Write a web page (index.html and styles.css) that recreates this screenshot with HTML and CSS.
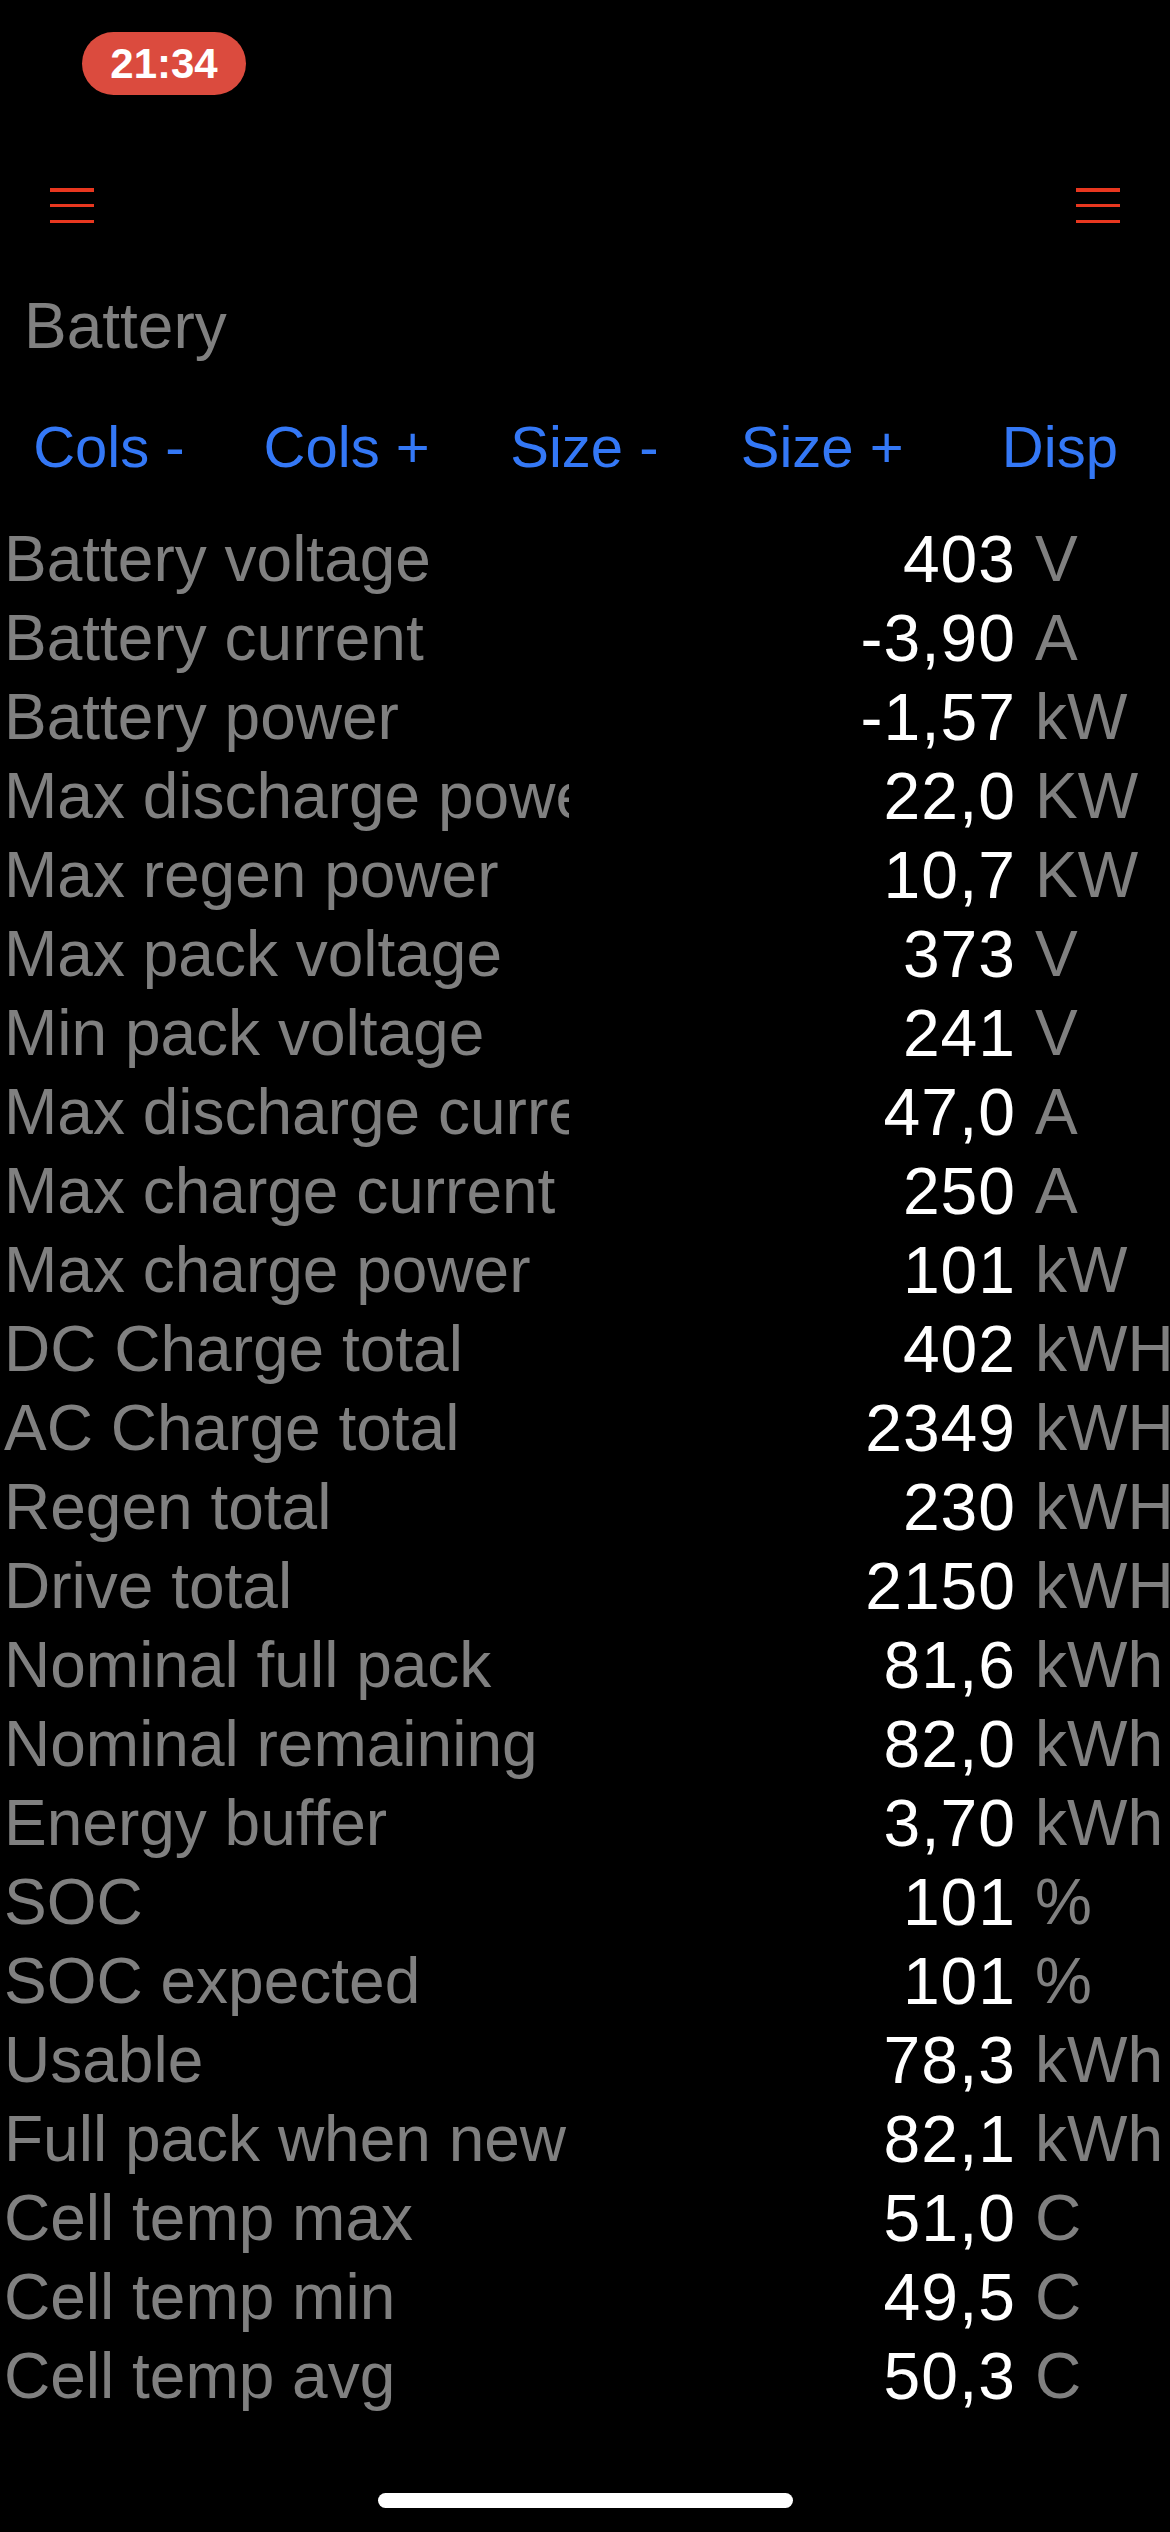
FILE: index.html
```html
<!DOCTYPE html>
<html>
<head>
<meta charset="utf-8">
<link rel="stylesheet" href="styles.css">
</head>
<body>
<div class="screen">
  <div class="status">
    <div class="pill">21:34</div>
  </div>
  <div class="toolbar">
    <div class="burger"><span></span><span></span><span></span></div>
    <div class="burger"><span></span><span></span><span></span></div>
  </div>
  <div class="title">Battery</div>
  <div class="buttons">
    <div class="btn">Cols -</div>
    <div class="btn">Cols +</div>
    <div class="btn">Size -</div>
    <div class="btn">Size +</div>
    <div class="btn">Disp</div>
  </div>
  <div class="list">
    <div class="row"><div class="lbl">Battery voltage</div><div class="val">403</div><div class="unit">V</div></div>
    <div class="row"><div class="lbl">Battery current</div><div class="val">-3,90</div><div class="unit">A</div></div>
    <div class="row"><div class="lbl">Battery power</div><div class="val">-1,57</div><div class="unit">kW</div></div>
    <div class="row"><div class="lbl">Max discharge power</div><div class="val">22,0</div><div class="unit">KW</div></div>
    <div class="row"><div class="lbl">Max regen power</div><div class="val">10,7</div><div class="unit">KW</div></div>
    <div class="row"><div class="lbl">Max pack voltage</div><div class="val">373</div><div class="unit">V</div></div>
    <div class="row"><div class="lbl">Min pack voltage</div><div class="val">241</div><div class="unit">V</div></div>
    <div class="row"><div class="lbl">Max discharge current</div><div class="val">47,0</div><div class="unit">A</div></div>
    <div class="row"><div class="lbl">Max charge current</div><div class="val">250</div><div class="unit">A</div></div>
    <div class="row"><div class="lbl">Max charge power</div><div class="val">101</div><div class="unit">kW</div></div>
    <div class="row"><div class="lbl">DC Charge total</div><div class="val">402</div><div class="unit">kWH</div></div>
    <div class="row"><div class="lbl">AC Charge total</div><div class="val">2349</div><div class="unit">kWH</div></div>
    <div class="row"><div class="lbl">Regen total</div><div class="val">230</div><div class="unit">kWH</div></div>
    <div class="row"><div class="lbl">Drive total</div><div class="val">2150</div><div class="unit">kWH</div></div>
    <div class="row"><div class="lbl">Nominal full pack</div><div class="val">81,6</div><div class="unit">kWh</div></div>
    <div class="row"><div class="lbl">Nominal remaining</div><div class="val">82,0</div><div class="unit">kWh</div></div>
    <div class="row"><div class="lbl">Energy buffer</div><div class="val">3,70</div><div class="unit">kWh</div></div>
    <div class="row"><div class="lbl">SOC</div><div class="val">101</div><div class="unit">%</div></div>
    <div class="row"><div class="lbl">SOC expected</div><div class="val">101</div><div class="unit">%</div></div>
    <div class="row"><div class="lbl">Usable</div><div class="val">78,3</div><div class="unit">kWh</div></div>
    <div class="row"><div class="lbl">Full pack when new</div><div class="val">82,1</div><div class="unit">kWh</div></div>
    <div class="row"><div class="lbl">Cell temp max</div><div class="val">51,0</div><div class="unit">C</div></div>
    <div class="row"><div class="lbl">Cell temp min</div><div class="val">49,5</div><div class="unit">C</div></div>
    <div class="row"><div class="lbl">Cell temp avg</div><div class="val">50,3</div><div class="unit">C</div></div>
  </div>
  <div class="home"></div>
</div>
</body>
</html>
```
FILE: styles.css
```css
html, body {
  margin: 0;
  padding: 0;
  background: #000;
}
.screen {
  position: relative;
  width: 1170px;
  height: 2532px;
  overflow: hidden;
  background: #000;
  font-family: "Liberation Sans", Arial, sans-serif;
}
.status {
  padding: 32px 0 0 82px;
  height: 64px;
}
.pill {
  width: 164px;
  height: 63px;
  border-radius: 32px;
  background: #db4b3e;
  color: #fff;
  font-size: 42px;
  font-weight: 700;
  line-height: 63px;
  text-align: center;
}
.toolbar {
  margin-top: 92px;
  padding: 0 50px;
  display: flex;
  justify-content: space-between;
}
.burger {
  width: 44px;
  height: 35px;
  display: flex;
  flex-direction: column;
  justify-content: space-between;
}
.burger span {
  display: block;
  height: 3.5px;
  background: #e8371f;
}
.title {
  margin-top: 64px;
  padding-left: 24px;
  font-size: 64px;
  line-height: 79px;
  color: #808080;
}
.buttons {
  margin-top: 41px;
  margin-left: -10px;
  display: grid;
  grid-template-columns: repeat(5, 237.75px);
}
.btn {
  text-align: center;
  font-size: 58px;
  line-height: 79px;
  color: #3478f6;
  white-space: nowrap;
}
.list {
  margin-top: 34px;
}
.row {
  display: grid;
  grid-template-columns: 565px 447px 19px 139px;
  padding-left: 4px;
  font-size: 64px;
  line-height: 79px;
  height: 79px;
}
.lbl {
  color: #808080;
  white-space: nowrap;
  overflow: hidden;
}
.val {
  grid-column: 2;
  color: #fff;
  font-size: 66px;
  letter-spacing: 1px;
  text-align: right;
  white-space: nowrap;
}
.unit {
  grid-column: 4;
  color: #808080;
  white-space: nowrap;
  overflow: hidden;
}
.home {
  position: absolute;
  left: 378px;
  top: 2493px;
  width: 415px;
  height: 15px;
  border-radius: 8px;
  background: #fff;
}
```
